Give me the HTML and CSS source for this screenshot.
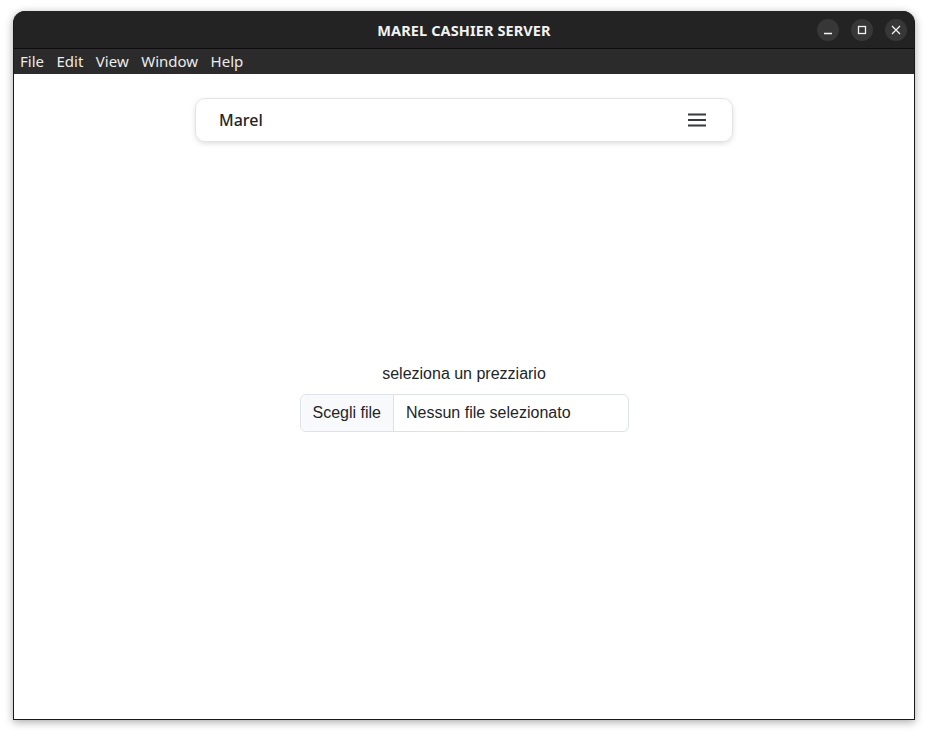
FILE: index.html
```html
<!DOCTYPE html>
<html lang="it">
<head>
<meta charset="utf-8">
<title>MAREL CASHIER SERVER</title>
<link rel="stylesheet" href="styles.css">
</head>
<body>
<div class="window">
  <div class="titlebar">
    <div class="title">MAREL CASHIER SERVER</div>
    <div class="controls">
      <span class="ctl"><svg width="10" height="10" viewBox="0 0 10 10"><path d="M1 8.5h8" stroke="#f2f2f2" stroke-width="1.3"/></svg></span>
      <span class="ctl"><svg width="10" height="10" viewBox="0 0 10 10"><rect x="1.5" y="1.5" width="7" height="7" fill="none" stroke="#f2f2f2" stroke-width="1.3"/></svg></span>
      <span class="ctl"><svg width="10" height="10" viewBox="0 0 10 10"><path d="M1 1l8 8M9 1l-8 8" stroke="#f2f2f2" stroke-width="1.3"/></svg></span>
    </div>
  </div>
  <div class="menubar">
    <span>File</span><span>Edit</span><span>View</span><span>Window</span><span>Help</span>
  </div>
  <div class="content">
    <nav class="navbar">
      <span class="brand">Marel</span>
      <svg class="burger" width="20" height="14" viewBox="0 0 20 14"><path d="M1 1.5h18M1 7h18M1 12.5h18" stroke="#343a40" stroke-width="2"/></svg>
    </nav>
    <main class="main">
      <div class="picker">
        <div class="label">seleziona un prezziario</div>
        <div class="file">
          <span class="file-btn">Scegli file</span>
          <span class="file-name">Nessun file selezionato</span>
        </div>
      </div>
    </main>
  </div>
</div>
</body>
</html>
```
FILE: styles.css
```css
* { box-sizing: border-box; }
html, body { margin: 0; padding: 0; background: #ffffff; }
body { width: 928px; height: 736px; overflow: hidden; }
.window {
  margin: 11px 0 0 13px;
  width: 902px;
  height: 709px;
  border-radius: 12px 12px 0 0;
  background: #232323;
  border: 1px solid #1a1a1a;
  border-top: none;
  box-shadow: 0 2px 9px rgba(0,0,0,0.35);
  display: flex;
  flex-direction: column;
  overflow: hidden;
}
.titlebar {
  height: 38px;
  flex: none;
  background: #232323;
  border-bottom: 1px solid #0c0c0c;
  display: flex;
  align-items: center;
  justify-content: center;
  position: relative;
}
.title {
  font-family: "Noto Sans", "DejaVu Sans", sans-serif;
  font-weight: 700;
  font-size: 14.5px;
  color: #f2f2f2;
  letter-spacing: 0.1px;
}
.controls {
  position: absolute;
  right: 7px;
  top: 8px;
  display: flex;
  gap: 12px;
}
.ctl {
  width: 22px;
  height: 22px;
  border-radius: 50%;
  background: #373737;
  display: flex;
  align-items: center;
  justify-content: center;
}
.menubar {
  height: 25px;
  flex: none;
  background: #2b2b2b;
  display: flex;
  align-items: center;
  gap: 12.5px;
  padding-left: 6px;
  padding-bottom: 2px;
  font-family: "Noto Sans", "DejaVu Sans", sans-serif;
  font-size: 15px;
  color: #ececec;
}
.content {
  flex: 1;
  background: #ffffff;
  display: flex;
  flex-direction: column;
  align-items: center;
  padding-top: 24px;
}
.navbar {
  width: 538px;
  height: 44px;
  flex: none;
  border: 1px solid #e3e3e3;
  border-radius: 10px;
  box-shadow: 0 2px 5px rgba(0,0,0,0.12);
  display: flex;
  align-items: center;
  justify-content: space-between;
  padding: 0 25px 0 23px;
}
.brand {
  font-family: "Noto Sans", "DejaVu Sans", sans-serif;
  font-size: 16px;
  font-weight: 500;
  color: #212529;
}
.burger { display: block; }
.main {
  flex: 1;
  display: flex;
  align-items: flex-start;
  justify-content: center;
  padding-top: 222px;
  width: 100%;
}
.picker {
  display: flex;
  flex-direction: column;
  align-items: center;
  gap: 11px;
  font-family: "Liberation Sans", Arial, sans-serif;
  font-size: 16px;
  color: #212529;
}
.label { line-height: 19px; }
.file {
  width: 329px;
  height: 38px;
  border: 1px solid #dee2e6;
  border-radius: 6px;
  display: flex;
  overflow: hidden;
}
.file-btn {
  background: #f8f9fa;
  border-right: 1px solid #dee2e6;
  padding: 0 12px;
  display: flex;
  align-items: center;
}
.file-name {
  padding: 0 12px;
  display: flex;
  align-items: center;
}
```
